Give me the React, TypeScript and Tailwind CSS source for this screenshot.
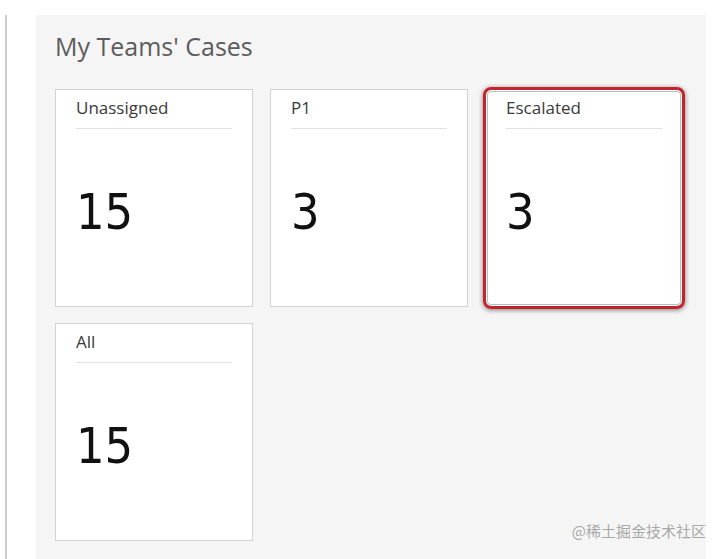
import React from "react";

type Tile = { label: string; count: number; highlight?: boolean };

const tiles: Tile[] = [
  { label: "Unassigned", count: 15 },
  { label: "P1", count: 3 },
  { label: "Escalated", count: 3, highlight: true },
  { label: "All", count: 15 },
];

const CaseTile = ({ label, count, highlight }: Tile) => (
  <div className="relative h-[218px] bg-white border border-[#d2d2d2]">
    {highlight && (
      <span className="absolute -inset-[3px] rounded-[8px] border-[3px] border-[#c3232c] shadow-[0_1px_5px_rgba(0,0,0,0.5),inset_0_0_0_1px_#fff,inset_0_0_0_2px_#bdbdbd]"></span>
    )}
    <div className="mx-[20px] h-[39px] border-b border-[#e2e2e2] pt-[7px] text-[17px] leading-[22px] text-[#3a3a3a] font-['Open_Sans',sans-serif]">
      {label}
    </div>
    <div className="ml-[20px] mt-[58px] text-[50px] leading-none text-[#111] font-['DejaVu_Sans_Condensed','DejaVu_Sans',sans-serif]">
      {count}
    </div>
  </div>
);

export default function App() {
  return (
    <div className="relative w-[719px] h-[559px] bg-white overflow-hidden flex pt-[15px] pl-[5px]">
      <div className="w-[2px] bg-[#cdcdcd]"></div>
      <div className="ml-[29px] w-[670px] bg-[#f5f5f5] pl-[19px] pt-[14px]">
        <h1 className="text-[25px] leading-[34px] text-[#5c5c5c] font-['Open_Sans',sans-serif]">
          My Teams' Cases
        </h1>
        <div className="mt-[26px] grid grid-cols-[198px_198px_198px] gap-x-[17px] gap-y-[16px]">
          {tiles.map((t) => (
            <CaseTile key={t.label} {...t} />
          ))}
        </div>
      </div>
      <span className="absolute right-[13px] bottom-[17px] text-[15px] text-[#a8a8a8] font-['Noto_Sans_CJK_SC',sans-serif]">
        @稀土掘金技术社区
      </span>
    </div>
  );
}
